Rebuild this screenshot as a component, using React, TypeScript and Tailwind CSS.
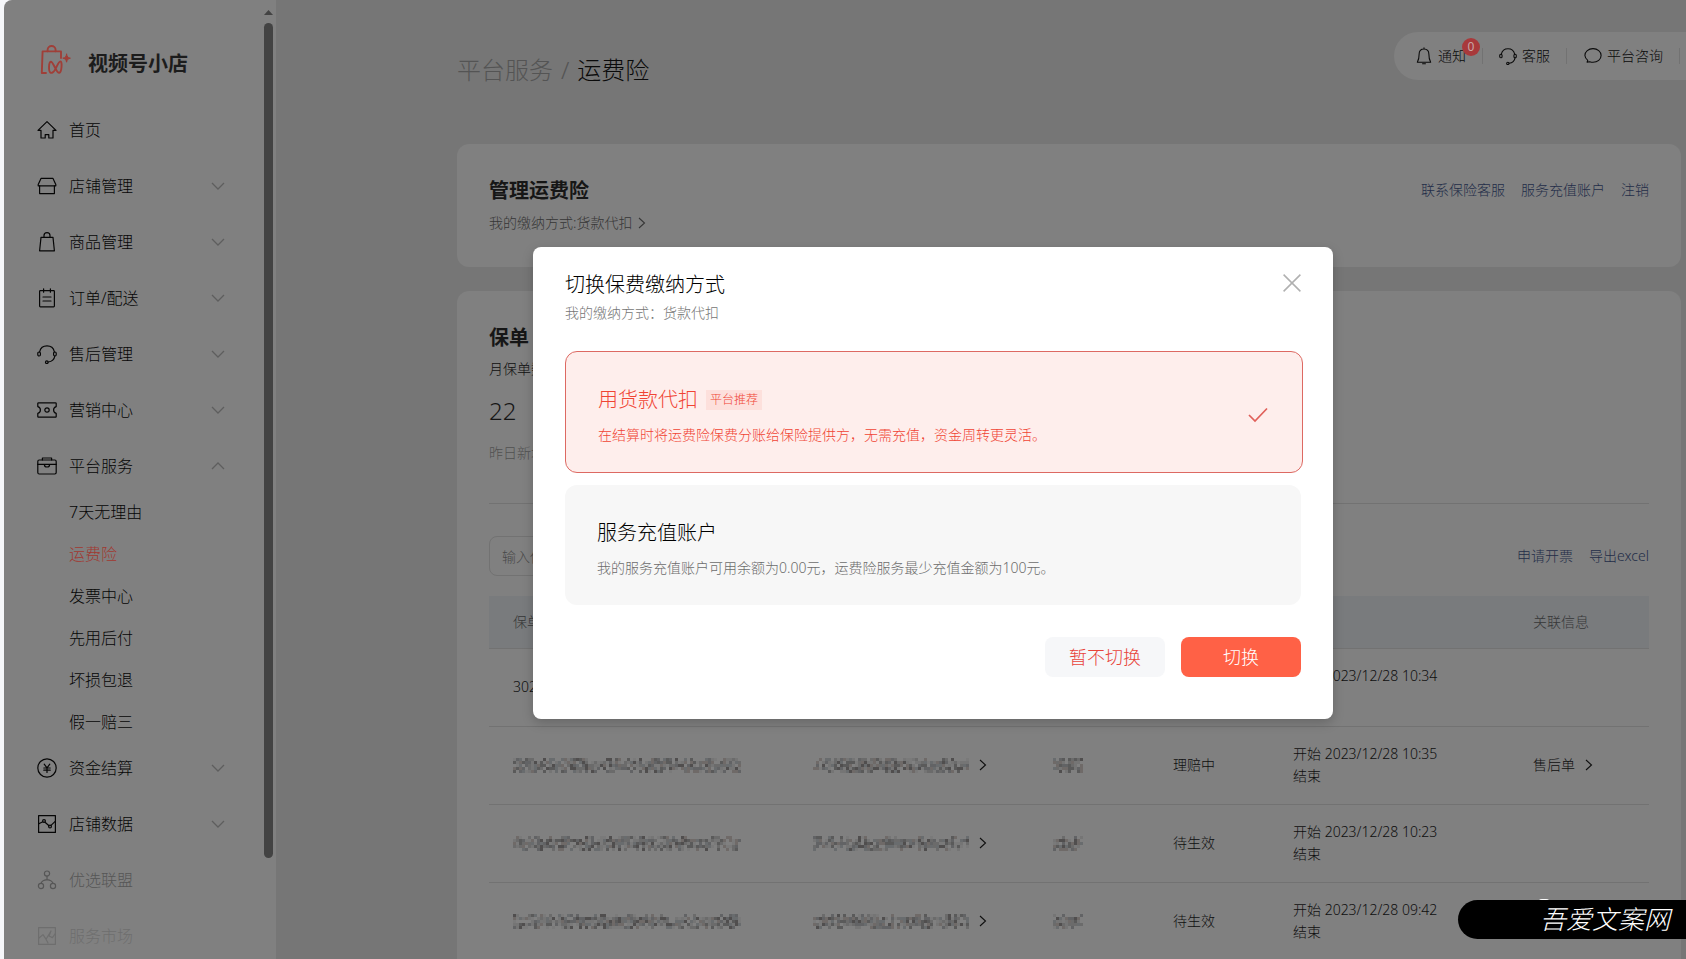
import type { ReactNode } from "react";

function Icon({ size = 20, children, className = "" }: { size?: number; children: ReactNode; className?: string }) {
  return (
    <svg
      width={size}
      height={size}
      viewBox="0 0 20 20"
      fill="none"
      stroke="currentColor"
      strokeWidth="1.2"
      strokeLinejoin="round"
      strokeLinecap="round"
      className={`shrink-0 ${className}`}
      aria-hidden="true"
    >
      {children}
    </svg>
  );
}

const HeadsetShape = () => (
  <>
    <path d="M2.600 7.800a7.600 7.600 0 0 1 14.800 0" />
    <rect x="0.800" y="8" width="2.600" height="4" rx="1.200" />
    <rect x="16.600" y="8" width="2.600" height="4" rx="1.200" />
    <path d="M17.800 12c-.5 3.300-3 5.600-6.600 6" />
    <circle cx="9.800" cy="18.200" r="1.300" />
  </>
);

const icons: Record<string, ReactNode> = {
  home: <path d="M10 1.600 1 10.400h3V18h4.200v-3.400h3.600V18H16v-7.600h3z" />,
  shop: (
    <>
      <path d="M4 2.400h12l2.800 6.200v1.200H1.200V8.600z" />
      <path d="M2.600 9.800v7.800h14.800V9.800" />
    </>
  ),
  bag: (
    <>
      <path d="M4 5.400h12l1.400 13.400H2.600z" />
      <path d="M7 5.400V3.600a3 3 0 0 1 6 0v1.800" />
    </>
  ),
  order: (
    <>
      <rect x="2.600" y="2.600" width="14.800" height="16.200" rx="0.800" />
      <path d="M6.600.8v3.400M13.400.8v3.400M6 9h8M6 13h8" />
    </>
  ),
  headset: <HeadsetShape />,
  ticket: (
    <>
      <path d="M1.600 2.800h16.800a.8.8 0 0 1 .8.8v3c-1.600.4-2.600 1.600-2.600 3.400s1 3 2.600 3.400v3a.8.8 0 0 1-.8.8H1.600a.8.8 0 0 1-.8-.8v-3c1.600-.4 2.600-1.600 2.600-3.400S2.400 7 .8 6.600v-3a.8.8 0 0 1 .8-.8z" />
      <circle cx="10" cy="10" r="2.200" />
    </>
  ),
  briefcase: (
    <>
      <rect x="0.800" y="4" width="18.400" height="14" rx="1.400" />
      <path d="M5.400 4V2h9.200v2M.8 8.400h6.600M12.600 8.400h6.600M7.400 8.400h5.200a2.600 2.600 0 0 1-5.200 0z" />
    </>
  ),
  yen: (
    <>
      <circle cx="10" cy="10" r="9.200" />
      <path d="m7.200 6.200 2.800 3.600 2.800-3.600M10 9.800v4.600M6.800 10h6.400M6.800 12.200h6.400" />
    </>
  ),
  chart: (
    <>
      <rect x="1.600" y="1.600" width="16.800" height="16.800" />
      <circle cx="7" cy="7" r="1.400" />
      <circle cx="13" cy="12.600" r="1.400" />
      <path d="m1.800 9.800 4-2M8 8.200l4 3.600M14 11.400l4.200-4" />
    </>
  ),
  alliance: (
    <>
      <circle cx="10" cy="3.600" r="2.600" />
      <circle cx="4" cy="16" r="2.600" />
      <circle cx="16" cy="16" r="2.600" />
      <path d="M10 6.200v3.400c-3.400.4-5.400 1.600-6 3.800M10 9.600c3.400.4 5.400 1.600 6 3.800" />
    </>
  ),
  market: (
    <>
      <rect x="1.600" y="1.600" width="16.800" height="16.800" />
      <path d="m2 12 4-3.400 3 4.600L14 5l-2 5 3.400 1.600L18 8M9 13.200 11 17" />
    </>
  ),
};

type NavEntry = { icon: string; label: string; arrow?: "up" | "down"; tone?: string };

const navTop: NavEntry[] = [
  { icon: "home", label: "首页" },
  { icon: "shop", label: "店铺管理", arrow: "down" },
  { icon: "bag", label: "商品管理", arrow: "down" },
  { icon: "order", label: "订单/配送", arrow: "down" },
  { icon: "headset", label: "售后管理", arrow: "down" },
  { icon: "ticket", label: "营销中心", arrow: "down" },
  { icon: "briefcase", label: "平台服务", arrow: "up" },
];
const subNav = ["7天无理由", "运费险", "发票中心", "先用后付", "坏损包退", "假一赔三"];
const navBottom: NavEntry[] = [
  { icon: "yen", label: "资金结算", arrow: "down" },
  { icon: "chart", label: "店铺数据", arrow: "down" },
  { icon: "alliance", label: "优选联盟", tone: "text-[#565656]" },
  { icon: "market", label: "服务市场", tone: "text-[#6e6e6e]" },
];

function NavRow({ item }: { item: NavEntry }) {
  return (
    <a href="#" className={`flex h-14 items-center pr-[39px] pl-[33px] text-base ${item.tone ?? "text-[#060606]"}`}>
      <Icon>{icons[item.icon]}</Icon>
      <span className="ml-3 flex-1">{item.label}</span>
      {item.arrow && (
        <svg
          width="14"
          height="8"
          viewBox="0 0 14 8"
          fill="none"
          stroke="#5e5e5e"
          strokeWidth="1.3"
          className={item.arrow === "up" ? "rotate-180" : ""}
          aria-hidden="true"
        >
          <path d="m1 1 6 6 6-6" />
        </svg>
      )}
    </a>
  );
}

function Sidebar() {
  return (
    <aside className="flex w-[272px] shrink-0 bg-[#808080]">
      <div className="flex-1 overflow-hidden pt-[43px]">
        <div className="flex h-[59px] items-start pl-9">
          <svg width="32" height="32" viewBox="0 0 32 32" fill="none" stroke="#9f3f38" strokeWidth="1.900" strokeLinejoin="round" strokeLinecap="round" aria-hidden="true">
            <path d="M6 30H1.800L2.600 8.400H21V15" />
            <path d="M7.600 8.200V7a4 4 0 0 1 8 0v1.200" />
            <path d="M15.200 26.400c-1.600 3-3.400 4-4.800 3.200-2-1.200-1.800-10.400.4-10.800 2.600-.4 5.400 11.600 8.400 11 2.600-.6 3.200-11.600 1.200-11.400-1.800.2-3.400 4.800-5.200 8z" />
            <path d="M26.600 11.200c.7 2.800 1.100 3.300 3.800 4-2.700.7-3.100 1.200-3.800 4-.7-2.800-1.100-3.300-3.800-4 2.700-.7 3.100-1.200 3.800-4z" fill="#9f3f38" strokeWidth="1" />
          </svg>
          <h1 className="mt-[6px] ml-4 text-xl leading-[30px] font-bold text-[#1c1c1c]">视频号小店</h1>
        </div>
        <nav aria-label="主导航">
          {navTop.map((n) => (
            <NavRow key={n.label} item={n} />
          ))}
          <ul className="-mt-[3px] -mb-[3px]">
            {subNav.map((s) => (
              <li key={s}>
                <a
                  href="#"
                  className={`flex h-[42px] items-center pl-[65px] text-base ${s === "运费险" ? "text-[#a03830]" : "text-[#060606]"}`}
                >
                  {s}
                </a>
              </li>
            ))}
          </ul>
          {navBottom.map((n) => (
            <NavRow key={n.label} item={n} />
          ))}
        </nav>
      </div>
      <div className="flex w-3 flex-col items-start pt-[10px]">
        <svg width="9" height="5" viewBox="0 0 9 5" className="mb-2" aria-hidden="true">
          <path d="M0 5 4.500 0 9 5z" fill="#434343" />
        </svg>
        <div className="h-[88%] w-[9px] rounded-full bg-[#434343]" />
      </div>
    </aside>
  );
}

function Chevron({ className = "" }: { className?: string }) {
  return (
    <svg width="8" height="12" viewBox="0 0 8 12" fill="none" stroke="currentColor" strokeWidth="1.100" className={className} aria-hidden="true">
      <path d="m1 1 5.500 5L1 11" />
    </svg>
  );
}

const greys = ["#5a5a5a", "#6b6b6b", "#626365", "#757575", "#504e4e", "#696c6e", "#7a7a7a", "#6f6a68"];

function Mosaic({ cols, seed }: { cols: number; seed: number }) {
  const cells: ReactNode[] = [];
  let s = seed * 7919 + 13;
  for (let x = 0; x < cols; x++) {
    for (let y = 0; y < 5; y++) {
      s = (s * 1103515 + 12345) % 2147483648;
      const r = (s >> 8) % 100;
      const limit = y === 0 || y === 4 ? 50 : 88;
      if (r < limit) {
        cells.push(<rect key={`${x}-${y}`} x={x * 3} y={y * 3} width="3" height="3" fill={greys[r % greys.length]} />);
      }
    }
  }
  return (
    <svg width={cols * 3} height="15" viewBox={`0 0 ${cols * 3} 15`} role="img" aria-label="已隐藏">
      {cells}
    </svg>
  );
}

const rows = [
  { id: "302", status: "待生效", time: "2023/12/28 10:34", link: false },
  { id: "", status: "理赔中", time: "2023/12/28 10:35", link: true },
  { id: "", status: "待生效", time: "2023/12/28 10:23", link: false },
  { id: "", status: "待生效", time: "2023/12/28 09:42", link: false },
];

function PolicyTable() {
  return (
    <table className="w-full table-fixed border-collapse text-left text-sm text-[#0f0f0f]">
      <colgroup>
        <col className="w-[300px]" />
        <col className="w-[240px]" />
        <col className="w-[120px]" />
        <col className="w-[120px]" />
        <col className="w-[240px]" />
        <col />
      </colgroup>
      <thead>
        <tr className="h-[52px] border-b border-[#727272] bg-[#797b7d] text-[#363738]">
          {["保单号", "订单号", "保费", "状态", "时间", "关联信息"].map((h) => (
            <th key={h} className="px-6 font-light">
              {h}
            </th>
          ))}
        </tr>
      </thead>
      <tbody>
        {rows.map((r, i) => (
          <tr key={r.time} className="h-[78px] border-b border-[#727272]">
            <td className="px-6">{r.id || <Mosaic cols={76} seed={i} />}</td>
            <td className="px-6">
              <a href="#" className="flex items-center gap-[10px]">
                <Mosaic cols={52} seed={i + 10} />
                <Chevron />
              </a>
            </td>
            <td className="px-6">
              <Mosaic cols={10} seed={i + 21} />
            </td>
            <td className="px-6">{r.status}</td>
            <td className="px-6 leading-[22px] whitespace-nowrap">
              开始 {r.time}
              <br />
              结束
            </td>
            <td className="px-6">
              {r.link && (
                <a href="#" className="flex items-center gap-[10px]">
                  售后单
                  <Chevron />
                </a>
              )}
            </td>
          </tr>
        ))}
      </tbody>
    </table>
  );
}

function HeaderTools() {
  return (
    <div className="flex h-12 items-center rounded-l-full bg-[#808080] pl-[21px] text-sm text-[#0a0a0a]">
      <button className="relative flex items-center gap-[5px]">
        <Icon size={18}>
          <path d="M10 2.200c-3.600 0-5.400 2.400-5.400 5.600 0 4-.4 6.400-2 9.200h14.800c-1.600-2.800-2-5.200-2-9.200 0-3.200-1.800-5.600-5.400-5.600zM10 .8v1.400M8.400 18.600h3.200" />
        </Icon>
        通知
        <span className="absolute -top-2 -right-[14px] flex size-[18px] items-center justify-center rounded-full bg-[#a8393b] text-xs font-normal text-[#c9a8a8]">
          0
        </span>
      </button>
      <span className="mr-4 ml-4 h-4 w-px bg-[#727272]" />
      <button className="flex items-center gap-[5px]">
        <Icon size={18}>
          <HeadsetShape />
        </Icon>
        客服
      </button>
      <span className="mr-[17px] ml-4 h-4 w-px bg-[#727272]" />
      <button className="flex items-center gap-[5px]">
        <Icon size={18}>
          <path d="M3.400 16.800 4.200 14.800A8 7.600 0 0 1 1 9.400C1 5 5 1.800 10 1.800s9 3.200 9 7.600-4 7.600-9 7.600c-1.200 0-2.400-.2-3.600-.6z" />
        </Icon>
        平台咨询
      </button>
      <span className="mr-[6px] ml-4 h-4 w-px bg-[#727272]" />
    </div>
  );
}

function Page() {
  return (
    <main className="min-w-0 flex-1 bg-[#767676] pr-[5px] pl-[181px]">
      <header className="-mr-[5px] flex items-start justify-between pt-8">
        <div className="flex gap-2 pt-5 text-2xl leading-9 text-[#545454]">
          <span>平台服务</span>
          <span>/</span>
          <span className="text-[#0a0a0a]">运费险</span>
        </div>
        <HeaderTools />
      </header>

      <section className="mt-14 flex h-[123px] justify-between rounded-xl bg-[#808080] px-8 pt-[31px]">
        <div>
          <h2 className="text-xl leading-8 font-bold text-[#161616]">管理运费险</h2>
          <a href="#" className="mt-1 flex items-center gap-[6px] text-sm leading-6 text-[#363636]">
            我的缴纳方式:货款代扣
            <Chevron />
          </a>
        </div>
        <div className="flex gap-4 text-sm leading-[30px] text-[#232d48]">
          <a href="#">联系保险客服</a>
          <a href="#">服务充值账户</a>
          <a href="#">注销</a>
        </div>
      </section>

      <section className="mt-6 rounded-t-xl bg-[#808080] px-8 pt-[31px]">
        <h2 className="text-xl leading-8 font-bold text-[#161616]">保单</h2>
        <p className="mt-[3px] text-sm leading-6 text-[#0f0f0f]">月保单数</p>
        <p className="mt-3 text-2xl leading-9 text-[#161616]">22</p>
        <p className="mt-3 text-sm leading-6 text-[#505050]">昨日新增 0</p>
        <hr className="mt-[38px] border-[#727272]" />
        <div className="mt-8 flex items-center justify-between">
          <input
            aria-label="保单号"
            placeholder="输入保单号"
            className="h-10 w-60 rounded-lg border border-[#727272] bg-transparent px-3 text-sm placeholder:text-[#484848]"
          />
          <div className="flex gap-4 text-sm text-[#232d48]">
            <a href="#">申请开票</a>
            <a href="#">导出excel</a>
          </div>
        </div>
        <div className="mt-5">
          <PolicyTable />
        </div>
        <div className="h-20" />
      </section>
    </main>
  );
}

function Dialog() {
  return (
    <div className="absolute inset-0 flex items-start justify-center pt-[247px] pl-[176px]">
      <div
        role="dialog"
        aria-modal="true"
        aria-labelledby="dialog-title"
        className="w-[800px] rounded-lg bg-white px-8 pt-[22px] pb-[42px] shadow-[0_4px_12px_rgba(0,0,0,0.2)]"
      >
        <div className="flex items-start justify-between">
          <div>
            <h2 id="dialog-title" className="text-xl leading-8 text-black">
              切换保费缴纳方式
            </h2>
            <p className="text-sm leading-6 text-[#757575]">我的缴纳方式：货款代扣</p>
          </div>
          <button aria-label="关闭" className="mt-[5px] text-[#b0b0b0]">
            <svg width="18" height="18" viewBox="0 0 18 18" fill="none" stroke="currentColor" strokeWidth="1.500" aria-hidden="true">
              <path d="m.6.6 16.800 16.800M17.400.6.6 17.400" />
            </svg>
          </button>
        </div>

        <div className="mt-[26px] flex flex-col gap-3">
          <label className="box-content flex h-[120px] w-full items-start rounded-xl border border-[#dd6962] bg-[#feeeec] text-[#f04434]">
            <input type="radio" name="payment" defaultChecked className="sr-only" />
            <span className="flex-1 pt-8 pl-8">
              <span className="flex items-center gap-2 text-xl leading-8">
                用货款代扣
                <span className="bg-[#fde0dc] px-1 text-xs leading-5">平台推荐</span>
              </span>
              <span className="mt-2 block text-sm leading-[22px]">在结算时将运费险保费分账给保险提供方，无需充值，资金周转更灵活。</span>
            </span>
            <svg width="20" height="16" viewBox="0 0 20 16" fill="none" stroke="#e0605a" strokeWidth="1.700" className="mt-[55px] mr-[34px]" aria-hidden="true">
              <path d="m1 8 6 6L19 1.500" />
            </svg>
          </label>
          <label className="flex h-[120px] items-start rounded-xl bg-[#f7f7f7] text-black">
            <input type="radio" name="payment" className="sr-only" />
            <span className="flex-1 pt-8 pl-8">
              <span className="block text-xl leading-8">服务充值账户</span>
              <span className="mt-2 block text-sm leading-[22px] text-[#6c6c6c]">
                我的服务充值账户可用余额为0.00元，运费险服务最少充值金额为100元。
              </span>
            </span>
          </label>
        </div>

        <div className="mt-8 flex justify-end gap-4 text-lg">
          <button className="h-10 w-[120px] rounded-lg bg-[#f6f7f9] text-[#e8443a]">暂不切换</button>
          <button className="h-10 w-[120px] rounded-lg bg-[#ff6146] text-white">切换</button>
        </div>
      </div>
    </div>
  );
}

export default function App() {
  return (
    <div className="h-screen overflow-hidden bg-[#f5f6f9] pl-1 font-['Noto_Sans','Noto_Sans_CJK_SC',sans-serif] font-light">
      <div className="relative flex h-full overflow-hidden rounded-tl-lg">
        <Sidebar />
        <Page />
        <Dialog />
        <div className="absolute right-0 bottom-5">
          <span className="absolute -top-px left-20 h-2 w-3 rounded-full bg-white" />
          <div className="relative flex h-[39px] items-center rounded-l-full bg-black pr-4 pl-[82px] text-[26px] text-white italic">
            吾爱文案网
          </div>
        </div>
      </div>
    </div>
  );
}
